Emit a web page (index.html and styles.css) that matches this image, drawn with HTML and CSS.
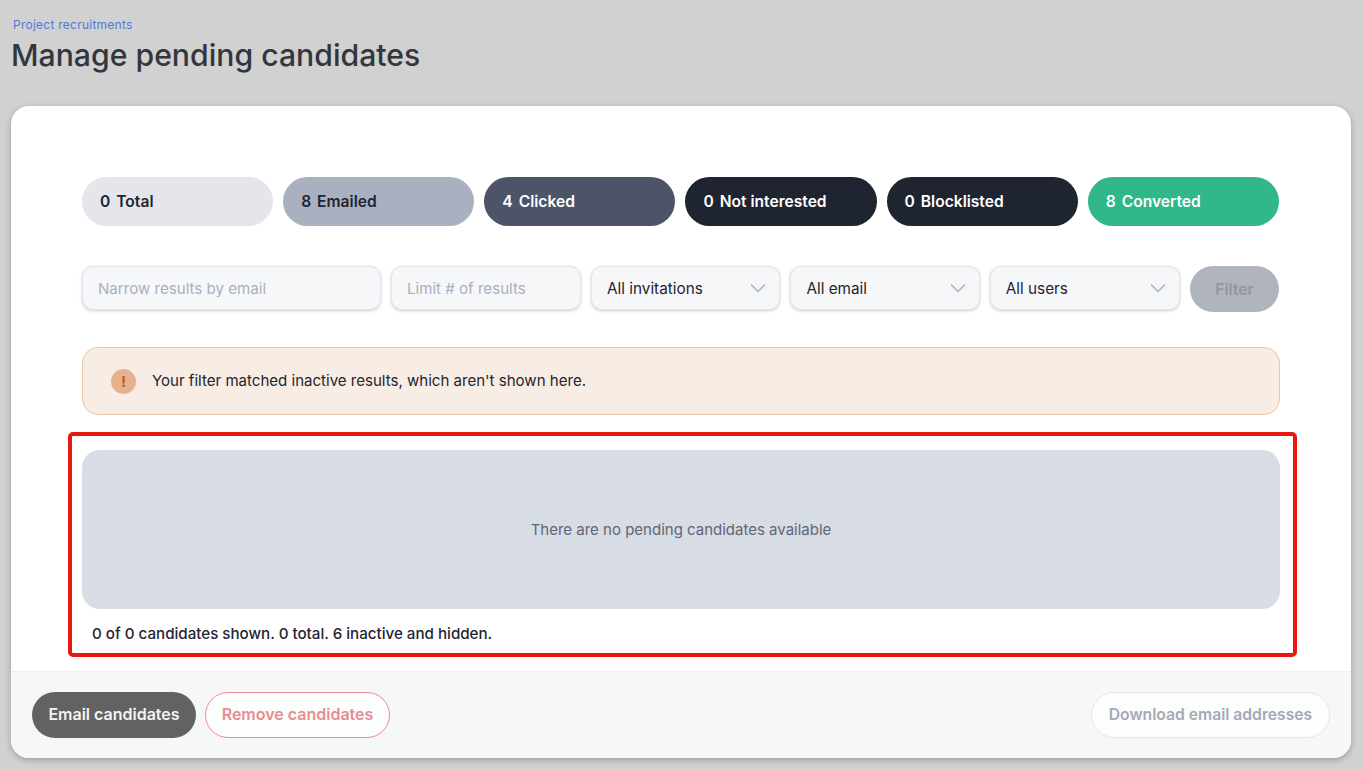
FILE: index.html
```html
<!DOCTYPE html>
<html lang="en">
<head>
    <meta charset="UTF-8">
    <meta name="viewport" content="width=device-width, initial-scale=1.0">
    <title>Manage pending candidates</title>
    <link rel="stylesheet" href="styles.css">
</head>
<body>
    <header class="page-head">
        <a class="crumb" href="#">Project recruitments</a>
        <h1>Manage pending candidates</h1>
    </header>

    <main class="card">
        <div class="card-body">
            <div class="stats">
                <div class="stat stat-total"><b>0</b><span>Total</span></div>
                <div class="stat stat-emailed"><b>8</b><span>Emailed</span></div>
                <div class="stat stat-clicked"><b>4</b><span>Clicked</span></div>
                <div class="stat stat-dark"><b>0</b><span>Not interested</span></div>
                <div class="stat stat-dark"><b>0</b><span>Blocklisted</span></div>
                <div class="stat stat-converted"><b>8</b><span>Converted</span></div>
            </div>

            <form class="filters">
                <input class="field" type="text" placeholder="Narrow results by email">
                <input class="field" type="text" placeholder="Limit # of results">
                <div class="field select">All invitations
                    <svg viewBox="0 0 16 10" width="16" height="10"><path d="M1 1.5l7 7 7-7"/></svg>
                </div>
                <div class="field select">All email
                    <svg viewBox="0 0 16 10" width="16" height="10"><path d="M1 1.5l7 7 7-7"/></svg>
                </div>
                <div class="field select">All users
                    <svg viewBox="0 0 16 10" width="16" height="10"><path d="M1 1.5l7 7 7-7"/></svg>
                </div>
                <button class="filter-btn" type="button">Filter</button>
            </form>

            <div class="alert">
                <span class="alert-icon">!</span>
                <p>Your filter matched inactive results, which aren't shown here.</p>
            </div>

            <section class="results">
                <div class="empty">There are no pending candidates available</div>
                <p class="count">0 of 0 candidates shown. 0 total. 6 inactive and hidden.</p>
            </section>
        </div>

        <footer class="card-foot">
            <button class="btn btn-email" type="button">Email candidates</button>
            <button class="btn btn-remove" type="button">Remove candidates</button>
            <button class="btn btn-download" type="button">Download email addresses</button>
        </footer>
    </main>
</body>
</html>
```

FILE: styles.css
```css
* {
    box-sizing: border-box;
}

html, body {
    height: 100%;
}

body {
    margin: 0;
    padding: 0 12px 11px 11px;
    overflow: hidden;
    background-color: #d1d1d1;
    color: #1f2431;
    font-family: Inter, "Liberation Sans", sans-serif;
}

.page-head {
    height: 106px;
    padding-top: 18px;
}

.crumb {
    display: block;
    margin-left: 2px;
    color: #5577d6;
    font-size: 12px;
    letter-spacing: 0.25px;
    line-height: 14px;
    text-decoration: none;
}

h1 {
    margin: 3px 0 0;
    color: #33363d;
    font-size: 30.2px;
    font-weight: 500;
    line-height: 40px;
}

.card {
    display: flex;
    flex-direction: column;
    height: 652px;
    background: #fff;
    border-radius: 18px;
    overflow: hidden;
    box-shadow: 0 2px 6px rgba(0, 0, 0, 0.25);
}

.card-body {
    flex: 1;
    padding: 71px 71px 0;
}

.stats {
    display: grid;
    grid-template-columns: repeat(6, 1fr);
    gap: 10px;
    width: 1196.8px;
}

.stat {
    display: flex;
    align-items: center;
    gap: 6px;
    height: 49px;
    padding: 0 18px;
    border-radius: 25px;
    font-size: 15.6px;
    font-weight: 600;
}

.stat b {
    font-weight: 600;
}

.stat-total {
    background: #e4e6eb;
}

.stat-emailed {
    background: #a9b0bf;
}

.stat-clicked {
    background: #4e5468;
    color: #fff;
}

.stat-dark {
    background: #1f2431;
    color: #fff;
}

.stat-converted {
    background: #31b88a;
    color: #fff;
}

.filters {
    display: flex;
    align-items: flex-start;
    gap: 10px;
    width: 1197px;
    margin-top: 40px;
}

.field {
    height: 44px;
    padding: 0 15px;
    background: #f6f7f9;
    border: 1px solid #e3e5ec;
    border-radius: 11px;
    box-shadow: 0 1px 3px rgba(60, 66, 87, 0.25);
    color: #1f2431;
    font-family: inherit;
    font-size: 15.1px;
}

.field::placeholder {
    color: #a9b0bf;
    opacity: 1;
}

.field:nth-child(1) {
    width: 299px;
}

.field:nth-child(2) {
    width: 190px;
}

.select {
    display: flex;
    align-items: center;
    justify-content: space-between;
    width: 189.4px;
    font-size: 15.3px;
}

.field:nth-child(5) {
    width: 190px;
}

.select svg {
    flex: none;
    margin-right: -2px;
    fill: none;
    stroke: #a9b0bf;
    stroke-width: 1.5;
}

.filter-btn {
    width: 89px;
    height: 46px;
    margin-left: auto;
    border: 0;
    border-radius: 23px;
    background: #b0b4bd;
    color: #92959d;
    font-family: inherit;
    font-size: 15.7px;
    font-weight: 600;
}

.alert {
    display: flex;
    align-items: center;
    gap: 16px;
    width: 1198px;
    height: 68px;
    margin-top: 35px;
    padding: 0 28px;
    background: #f8ede4;
    border: 1px solid #ecc5a2;
    border-radius: 16px;
    font-size: 15.05px;
}

.alert p {
    margin: -2px 0 0;
}

.alert-icon {
    width: 25px;
    height: 25px;
    border-radius: 50%;
    background: #e6b18f;
    color: #c45a1a;
    font-size: 15px;
    font-weight: 700;
    line-height: 25px;
    text-align: center;
}

.results {
    width: 1229px;
    height: 225px;
    margin: 17px 0 0 -14px;
    padding: 14px 13px 0 10px;
    border: 4px solid #e8170f;
    border-radius: 5px;
}

.empty {
    display: flex;
    align-items: center;
    justify-content: center;
    height: 159px;
    background: #d8dce5;
    border-radius: 18px;
    color: #5f6675;
    font-size: 15px;
}

.count {
    margin: 16px 0 0 10px;
    font-size: 15.15px;
    font-weight: 500;
    line-height: 18px;
}

.card-foot {
    display: flex;
    align-items: center;
    gap: 9px;
    height: 87px;
    padding: 0 21px;
    background: #f6f7f9;
    border-top: 1px solid #eceef2;
}

.btn {
    height: 46px;
    padding: 0 0 2px;
    border-radius: 23px;
    font-family: inherit;
    font-size: 16px;
    font-weight: 600;
}

.btn-email {
    width: 164px;
    background: #626262;
    border: 0;
    color: #f4f4f4;
}

.btn-remove {
    width: 185px;
    background: #fcfdfd;
    border: 1px solid #e88d8d;
    color: #e88d8d;
}

.btn-download {
    width: 239px;
    margin-left: auto;
    background: #fcfdfd;
    border: 1px solid #e3e5ec;
    color: #a5a9b5;
    font-size: 15.7px;
}
```
